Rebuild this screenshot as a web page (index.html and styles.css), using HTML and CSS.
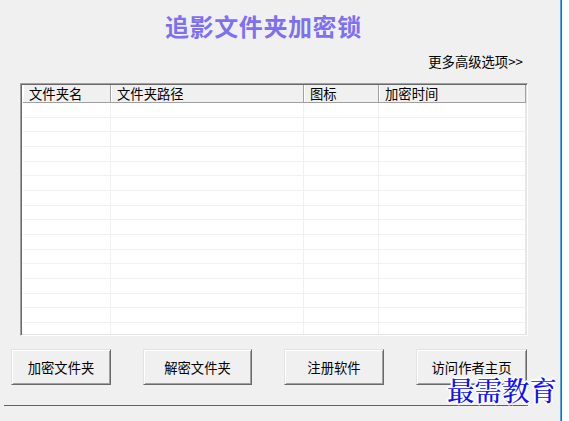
FILE: index.html
```html
<!DOCTYPE html>
<html lang="zh">
<head>
<meta charset="utf-8">
<title>追影文件夹加密锁</title>
<link rel="stylesheet" href="styles.css">
</head>
<body>
<div class="window">
  <h1 class="title">追影文件夹加密锁</h1>
  <div class="more-row"><span class="more">更多高级选项&gt;&gt;</span></div>
  <div class="list">
    <div class="list-head">
      <div class="hcell c1">文件夹名</div>
      <div class="hcell c2">文件夹路径</div>
      <div class="hcell c3">图标</div>
      <div class="hcell c4">加密时间</div>
    </div>
    <div class="list-body">
      <div class="col c1"></div>
      <div class="col c2"></div>
      <div class="col c3"></div>
      <div class="col c4"></div>
    </div>
  </div>
  <div class="buttons">
    <button class="btn b1">加密文件夹</button>
    <button class="btn b2">解密文件夹</button>
    <button class="btn b3">注册软件</button>
    <button class="btn b4">访问作者主页</button>
  </div>
  <div class="rule"></div>
  <div class="watermark">最需教育</div>
</div>
</body>
</html>
```
FILE: styles.css
```css
html, body {
  margin: 0;
  padding: 0;
  background: #ffffff;
}
body {
  width: 569px;
  height: 421px;
  overflow: hidden;
  font-family: "Noto Sans CJK SC", "Liberation Sans", sans-serif;
  font-size: 13.33px;
  color: #000;
}
.window {
  position: relative;
  box-sizing: border-box;
  width: 561px;
  height: 421px;
  background: #f0f0f0;
  border-right: 1px solid #4aa6e8;
  box-shadow: 1px 0 0 #1f67b8;
  display: flex;
  flex-direction: column;
}
.title {
  margin: 12px 0 0 165px;
  font-size: 24px;
  line-height: 28px;
  font-weight: bold;
  letter-spacing: 0.6px;
  color: #7d70f2;
}
.more-row {
  display: flex;
  justify-content: flex-end;
  padding-right: 37px;
  margin-top: 14px;
}
.more {
  font-size: 13.33px;
  line-height: 16px;
}
.list {
  flex: none;
  box-sizing: border-box;
  margin: 13px 0 0 20px;
  width: 508px;
  height: 253px;
  border-top: 1px solid #a0a0a0;
  border-left: 1px solid #a0a0a0;
  border-right: 1px solid #ffffff;
  border-bottom: 1px solid #ffffff;
  box-shadow: inset 1px 1px 0 #696969, inset -1px -1px 0 #e3e3e3;
  padding: 1px 1px 1px 2px;
  display: flex;
  flex-direction: column;
  background: #ffffff;
}
.list-head {
  display: grid;
  grid-template-columns: 88px 193px 75px 1fr;
  height: 18px;
  background: #f0f0f0;
  border-bottom: 1px solid #a0a0a0;
  box-sizing: border-box;
}
.hcell {
  padding-left: 6px;
  line-height: 17px;
  border-right: 1px solid #a0a0a0;
  box-shadow: inset 1px 0 0 #ffffff;
  white-space: nowrap;
  overflow: hidden;
}
.list-body {
  flex: 1;
  display: grid;
  grid-template-columns: 88px 193px 75px 1fr;
  background: repeating-linear-gradient(to bottom, #ffffff 0, #ffffff 13.67px, #f0f0f0 13.67px, #f0f0f0 14.67px);
}
.col {
  border-right: 1px solid #f0f0f0;
}
.col.c4 {
  border-right: 1px solid #e8e8e8;
}
.buttons {
  flex: none;
  display: grid;
  grid-template-columns: 100px 109px 100px 111px;
  column-gap: 32px;
  margin: 13px 0 0 11px;
}
.btn {
  box-sizing: border-box;
  height: 36px;
  padding: 0;
  font-family: "Noto Sans CJK SC", "Liberation Sans", sans-serif;
  font-size: 13.33px;
  color: #000;
  background: #f0f0f0;
  border-top: 1px solid #e3e3e3;
  border-left: 1px solid #e3e3e3;
  border-right: 1px solid #696969;
  border-bottom: 1px solid #696969;
  box-shadow: inset 1px 1px 0 #ffffff, inset -1px -1px 0 #a0a0a0;
}
.rule {
  flex: none;
  margin: 20px 0 0 4px;
  width: 524px;
  height: 1px;
  background: #ff0a80;
}
.watermark {
  position: absolute;
  left: 447px;
  top: 369px;
  font-family: "Noto Serif CJK SC", "AR PL UKai CN", "Noto Sans CJK SC", serif;
  font-size: 27.5px;
  font-weight: 500;
  line-height: 40px;
  color: #1010ff;
  white-space: nowrap;
  text-shadow: 1px 0 0 #fff, -1px 0 0 #fff, 0 1px 0 #fff, 0 -1px 0 #fff,
               1px 1px 0 #fff, -1px -1px 0 #fff, 1px -1px 0 #fff, -1px 1px 0 #fff,
               2px 0 0 #fff, -2px 0 0 #fff, 0 2px 0 #fff, 0 -2px 0 #fff;
}
```
